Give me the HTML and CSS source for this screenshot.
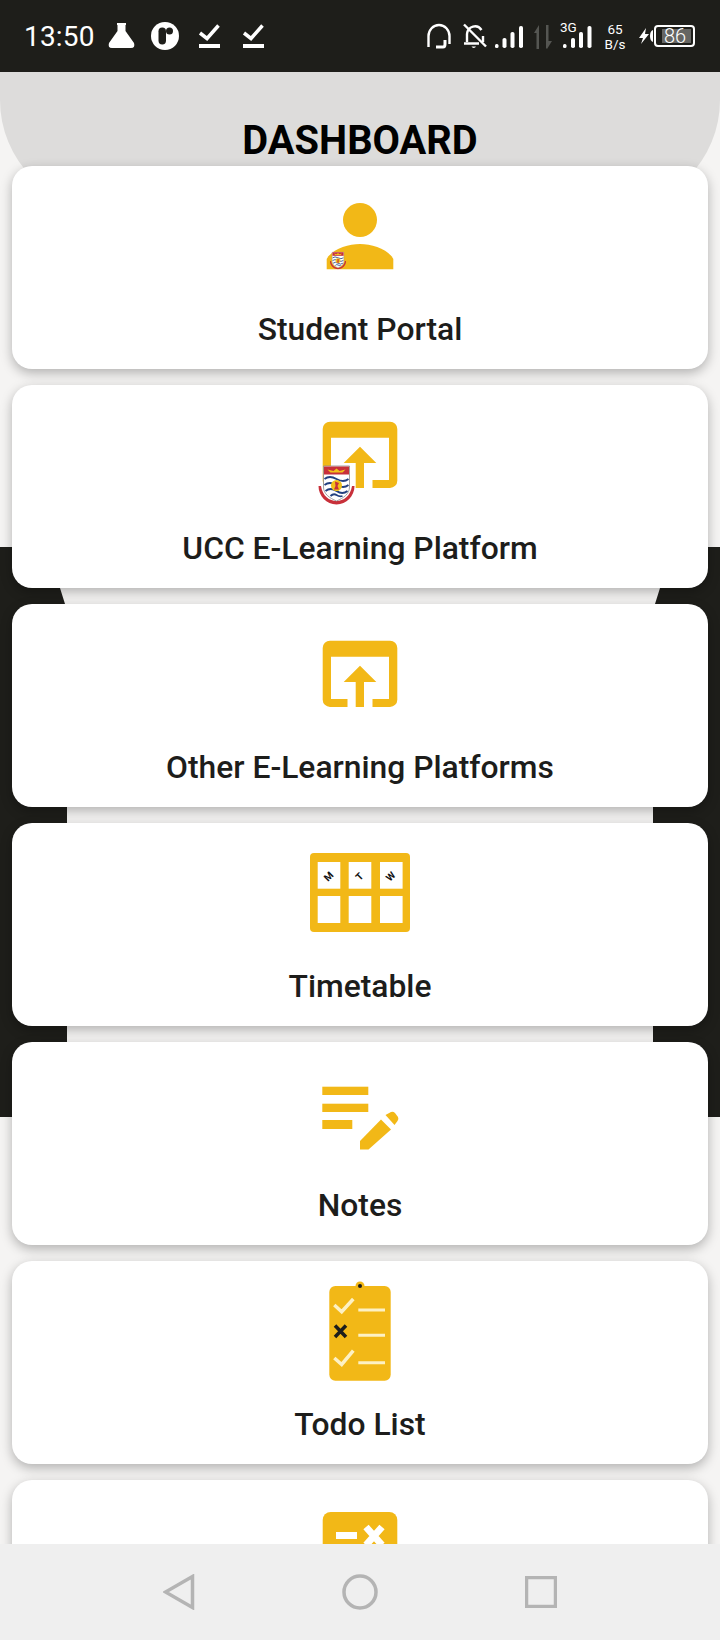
FILE: index.html
```html
<!DOCTYPE html>
<html lang="en">
<head>
    <meta charset="UTF-8">
    <meta name="viewport" content="width=device-width, initial-scale=1.0">
    <title>Dashboard</title>
    <link rel="stylesheet" href="styles.css">
</head>
<body>

    <!-- shared icon parts -->
    <svg class="defs" width="0" height="0">
        <symbol id="crest" viewBox="0 0 38 40">
            <path d="M1 21 C1 31 9 39.500 19 39.500 C29 39.500 37 31 37 21 L34.500 21 C33 31 26 36 19 36 C12 36 5 31 3.500 21Z" fill="#c8303a"/>
            <path d="M6 1 H32 V22 C32 29 26 33 19 36 C12 33 6 29 6 22Z" fill="#fff" stroke="#8a8a8a" stroke-width=".8"/>
            <rect x="6.5" y="1.5" width="25" height="8" fill="#c8303a"/>
            <path d="M10 4.500 L16 6 L19 3.500 L22 6 L28 4.500 L25 7.500 H13Z" fill="#f2c21a"/>
            <path d="M7 14 Q12 10 19 14 T31 14 M7 20 Q12 16 19 20 T31 20 M8 26 Q13 22 19 26 T30 26 M13 31 Q16 28 19 30 T25 31" fill="none" stroke="#23407f" stroke-width="1.800"/>
            <circle cx="19" cy="20.5" r="5.500" fill="#f2c21a"/>
            <path d="M17.500 16.500 L21.500 18 L20 21 L21.500 24.500 H16.500 L18 21Z" fill="#c8303a"/>
        </symbol>
        <symbol id="open-box" viewBox="0 0 100 100">
            <path d="M20 6.7 H80 a7.3 7.3 0 0 1 7.3 7.3 V65.7 a7.3 7.3 0 0 1 -7.3 7.3 H62.5 V65 H79 V22.7 H21 V65 H37.5 V73 H20 a7.3 7.3 0 0 1 -7.3 -7.3 V14 a7.3 7.3 0 0 1 7.3 -7.3Z"/>
            <path d="M50 31.7 L66.3 48 H54 V73 H45.7 V48 H33.7Z"/>
        </symbol>
    </svg>

    <div class="status-bar">
        <span class="clock">13:50</span>
        <svg class="status-left" width="160" height="72" viewBox="105 0 160 72">
            <path d="M117 23 H126 V25 H125.500 V31 L134 43 Q135.500 48 131 48 H112 Q107.500 48 109 43 L117.500 31 V25 H117Z" fill="#fff"/>
            <circle cx="165" cy="36" r="14" fill="#fff"/>
            <rect x="158.500" y="27.500" width="7.500" height="17" rx="3.700" fill="#1e1e1a"/>
            <circle cx="169.500" cy="31" r="3.500" fill="#1e1e1a"/>
            <path d="M200 33 L207 38.500 L218.500 25.500 M244 33 L251 38.500 L262.500 25.500" fill="none" stroke="#fff" stroke-width="3.500"/>
            <rect x="199" y="44" width="21" height="4" fill="#fff"/>
            <rect x="243" y="44" width="21" height="4" fill="#fff"/>
        </svg>
        <svg class="status-right" width="280" height="72" viewBox="420 0 280 72">
            <!-- headset -->
            <path d="M428.500 47 V36 A10.500 11 0 0 1 449.500 36 V44" fill="none" stroke="#fff" stroke-width="2.400"/>
            <path d="M436 47 H443 Q445 47 445 44 V40" fill="none" stroke="#fff" stroke-width="3"/>
            <!-- bell off -->
            <path d="M467 42 V34 A8 8.500 0 0 1 481.500 30 M483 36 V42 M464 43.500 H479" fill="none" stroke="#fff" stroke-width="2.400"/>
            <path d="M471.500 46.500 H476 A2.500 2.500 0 0 1 471.500 46.500Z" fill="#fff"/>
            <path d="M464 24.500 L486 46.500" stroke="#fff" stroke-width="2.400"/>
            <!-- signal 1 -->
            <g fill="#fff">
                <rect x="495" y="44" width="3.500" height="4" rx="1.500"/>
                <rect x="502.500" y="38" width="4" height="10" rx="1.800"/>
                <rect x="510.500" y="32" width="4" height="16" rx="1.800"/>
                <rect x="519" y="26" width="4" height="22" rx="1.800"/>
            </g>
            <!-- data arrows, dimmed -->
            <path d="M534 33 L539 25 V49 H536.500 V33Z M546 25 H548.500 V41 H552 L547 49 L546 48Z" fill="#555652"/>
            <!-- signal 2 -->
            <text class="tiny" x="560" y="32">3G</text>
            <g fill="#fff">
                <rect x="563" y="44" width="3.500" height="4" rx="1.500"/>
                <rect x="571" y="38" width="4" height="10" rx="1.800"/>
                <rect x="579" y="32" width="4" height="16" rx="1.800"/>
                <rect x="587.500" y="26" width="4" height="22" rx="1.800"/>
            </g>
            <text class="speed" x="615" y="33.500">65</text>
            <text class="speed" x="615" y="48.500">B/s</text>
            <!-- charging battery -->
            <path d="M646 28 L639 38 H643 L641 44 L649 34 H645Z" fill="#fff"/>
            <path d="M653 30 Q650 31 650 36 Q650 41 653 42Z" fill="#fff"/>
            <rect x="655" y="26" width="39" height="20" rx="3" fill="none" stroke="#fff" stroke-width="2"/>
            <rect x="662" y="29" width="29" height="14" fill="#666663"/>
            <text class="batt" x="664" y="43">86</text>
        </svg>
    </div>

    <main class="screen">
        <div class="blob blob-left"></div>
        <div class="blob blob-right"></div>

        <header class="top-panel">
            <h1>DASHBOARD</h1>
        </header>

        <section class="card-list">
            <a class="card">
                <svg class="card-icon" viewBox="0 0 100 100">
                    <circle cx="50" cy="24" r="17"/>
                    <path d="M16.700 73.300 V63 C22 53 38 48 50 48 C62 48 78 53 83.300 63 V73.300Z"/>
                    <use href="#crest" x="19.500" y="55.500" width="17" height="18"/>
                </svg>
                <span class="card-label">Student Portal</span>
            </a>
            <a class="card">
                <svg class="card-icon" viewBox="0 0 100 100">
                    <use href="#open-box" width="100" height="100"/>
                    <use href="#crest" x="7.500" y="50" width="38" height="40"/>
                </svg>
                <span class="card-label">UCC E-Learning Platform</span>
            </a>
            <a class="card">
                <svg class="card-icon" viewBox="0 0 100 100">
                    <use href="#open-box" width="100" height="100"/>
                </svg>
                <span class="card-label">Other E-Learning Platforms</span>
            </a>
            <a class="card">
                <svg class="card-icon" viewBox="0 0 100 100">
                    <rect x="0" y="0" width="100" height="79" rx="4"/>
                    <g fill="#fff">
                        <rect x="7.700" y="9" width="22.600" height="26.700"/>
                        <rect x="38.700" y="9" width="22.600" height="26.700"/>
                        <rect x="70" y="9" width="22.600" height="26.700"/>
                        <rect x="7.700" y="43" width="22.600" height="27"/>
                        <rect x="38.700" y="43" width="22.600" height="27"/>
                        <rect x="70" y="43" width="22.600" height="27"/>
                    </g>
                    <text class="day" transform="translate(21 26) rotate(-45)">M</text>
                    <text class="day" transform="translate(52 26) rotate(-45)">T</text>
                    <text class="day" transform="translate(83 26) rotate(-45)">W</text>
                </svg>
                <span class="card-label">Timetable</span>
            </a>
            <a class="card">
                <svg class="card-icon" viewBox="0 0 100 100">
                    <rect x="12.300" y="14.700" width="46" height="8.300"/>
                    <rect x="12.300" y="31.700" width="46" height="8.300"/>
                    <rect x="12.300" y="48" width="30" height="9"/>
                    <path d="M50 77.500 V69 L71 47.500 L81 57.500 L58.500 77.500Z"/>
                    <path d="M75.500 43 L81 40 Q83 39 85 41 L88 45 Q89 47 87.500 49 L84.500 53Z"/>
                </svg>
                <span class="card-label">Notes</span>
            </a>
            <a class="card">
                <svg class="card-icon" viewBox="0 0 100 100">
                    <circle cx="50" cy="-5" r="4.500"/>
                    <rect x="19.300" y="-5" width="61.400" height="94.700" rx="6"/>
                    <circle cx="50" cy="-5" r="2" fill="#1d1d1b"/>
                    <g fill="none" stroke="#fdf1c4">
                        <path d="M24.300 14 L31.700 20.700 L43.300 8 M24.300 67 L31.700 73.500 L43.300 59.700" stroke-width="3.500"/>
                        <path d="M48.300 19 H75 M48.300 44.300 H75 M48.300 71.700 H75" stroke-width="3"/>
                    </g>
                    <path d="M25 34.500 L36 46 M36 34.500 L25 46" stroke="#1d1d1b" stroke-width="3.500" fill="none"/>
                </svg>
                <span class="card-label">Todo List</span>
            </a>
            <a class="card">
                <svg class="card-icon" viewBox="0 0 100 100">
                    <rect x="12.700" y="2" width="74.600" height="90" rx="8"/>
                    <rect x="26" y="22" width="21" height="7" fill="#fff"/>
                    <path d="M56 17 L72 35 M72 17 L56 35" stroke="#fff" stroke-width="7" fill="none"/>
                </svg>
            </a>
        </section>
    </main>

    <nav class="nav-bar">
        <svg width="32" height="36" viewBox="0 0 32 36">
            <path d="M29.500 2.500 V33.500 L2.500 18Z" class="nav-shape"/>
        </svg>
        <svg width="36" height="36" viewBox="0 0 36 36">
            <circle cx="18" cy="18" r="16" class="nav-shape"/>
        </svg>
        <svg width="32" height="32" viewBox="0 0 32 32">
            <rect x="1.500" y="1.500" width="29" height="29" class="nav-shape"/>
        </svg>
    </nav>

</body>
</html>
```

FILE: styles.css
```css
:root {
    --dark: #1e1e1a;
    --yellow: #f2b817;
    --text: #1d1d1b;
    --page: #f5f4f3;
}
* { margin: 0; padding: 0; box-sizing: border-box; }
body { width: 720px; height: 1640px; overflow: hidden; display: flex; flex-direction: column; font-family: Roboto, sans-serif; background-color: var(--page); color: var(--text); }
.defs { position: absolute; }

/* status bar */
.status-bar { height: 72px; flex-shrink: 0; display: flex; align-items: center; padding-left: 24px; padding-right: 20px; background-color: var(--dark); color: #fff; }
.clock { font-size: 28px; letter-spacing: 0.2px; width: 81px; }
.status-right { margin-left: auto; }
.tiny { font-size: 13.5px; fill: #fff; }
.speed { font-size: 13.5px; fill: #fff; text-anchor: middle; }
.batt { font-size: 20px; font-weight: 300; fill: #fff; }

/* main area */
.screen { position: relative; flex: 1; min-height: 0; overflow: hidden; }
.blob { position: absolute; top: 475px; width: 67px; height: 570px; background-color: var(--dark); clip-path: polygon(0 0, 40px 0, 60px 41px, 65px 57px, 67px 90px, 67px 100%, 0 100%); }
.blob-left { left: 0; }
.blob-right { right: 0; transform: scaleX(-1); }

.top-panel { position: relative; height: 138px; background-color: #dddcdb; border-radius: 0 0 110px 110px; text-align: center; padding-top: 46px; }
.top-panel h1 { font-size: 39.8px; line-height: 46px; font-weight: 700; color: #000; }

/* cards */
.card-list { position: relative; margin-top: -44px; padding: 0 12px; display: flex; flex-direction: column; gap: 16px; }
.card { height: 203px; flex-shrink: 0; display: flex; flex-direction: column; align-items: center; padding-top: 30px; background-color: #fff; border-radius: 20px; box-shadow: 0 4px 12px rgba(0, 0, 0, 0.28); }
.card-icon { width: 100px; height: 100px; overflow: visible; fill: var(--yellow); }
.card-label { margin-top: 15px; font-size: 31.8px; line-height: 36px; font-weight: 500; }
.day { font-size: 10px; font-weight: 700; fill: #111; text-anchor: middle; }

/* nav bar */
.nav-bar { position: relative; height: 96px; flex-shrink: 0; display: flex; align-items: center; justify-content: center; gap: 147px; background-color: #efefef; }
.nav-shape { fill: none; stroke: #b4b4b4; stroke-width: 3.5; }
```
